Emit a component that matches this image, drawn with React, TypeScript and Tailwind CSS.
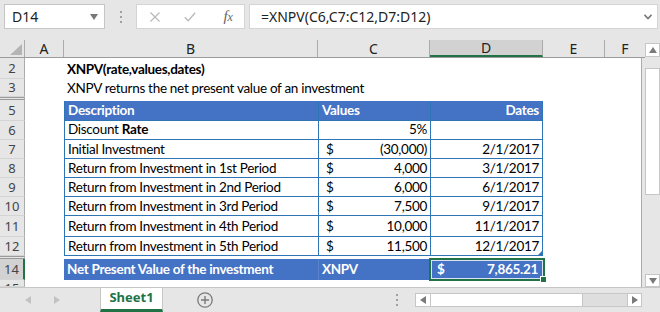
import React from 'react';

const H: Record<number, string> = {
  3: 'h-[3px]',
  7: 'h-[7px]',
  18: 'h-[18px]',
  19: 'h-[19px]',
  21: 'h-[21px]',
};

const cell = "font-['Lato',sans-serif] text-[13.5px] tracking-[-0.3px] leading-none";
const ui = "font-['Noto_Sans',sans-serif]";

type Item = { n: string; h: number; label: string; value: string; date: string };

const items: Item[] = [
  { n: '7', h: 19, label: 'Initial Investment', value: '(30,000)', date: '2/1/2017' },
  { n: '8', h: 19, label: 'Return from Investment in 1st Period', value: '4,000', date: '3/1/2017' },
  { n: '9', h: 19, label: 'Return from Investment in 2nd Period', value: '6,000', date: '6/1/2017' },
  { n: '10', h: 19, label: 'Return from Investment in 3rd Period', value: '7,500', date: '9/1/2017' },
  { n: '11', h: 21, label: 'Return from Investment in 4th Period', value: '10,000', date: '11/1/2017' },
  { n: '12', h: 19, label: 'Return from Investment in 5th Period', value: '11,500', date: '12/1/2017' },
];

function Row({ n, h, sel, cut, children }: { n: string; h: number; sel?: boolean; cut?: boolean; children?: React.ReactNode }) {
  return (
    <div className={`flex ${H[h]}`}>
      <div
        className={`w-[25px] shrink-0 flex justify-center overflow-hidden border-b border-b-[#d4d4d4] text-[13px] tracking-normal text-[#444] ${ui} ${
          cut ? 'items-start pt-[2px]' : 'items-center'
        } ${sel ? 'bg-[#d2d2d2] border-r-2 border-r-[#217346]' : 'bg-[#e6e6e6] border-r border-r-[#ababab]'}`}
      >
        {n}
      </div>
      <div className="w-[39px] shrink-0" />
      {children}
    </div>
  );
}

function Hidden() {
  return (
    <div className="flex h-[3px]">
      <div className="w-[25px] shrink-0 bg-[#e6e6e6] border-y border-y-[#9a9a9a] border-r border-r-[#ababab]" />
    </div>
  );
}

function Tri({ dir, color }: { dir: 'l' | 'r' | 'u' | 'd'; color: string }) {
  const pts = {
    l: '6,0 6,8 0,4',
    r: '0,0 0,8 6,4',
    u: '0,6 8,6 4,0',
    d: '0,0 8,0 4,6',
  }[dir];
  const vb = dir === 'l' || dir === 'r' ? '0 0 6 8' : '0 0 8 6';
  const cls = dir === 'l' || dir === 'r' ? 'w-[6px] h-[8px]' : 'w-[8px] h-[6px]';
  return (
    <svg viewBox={vb} className={cls}>
      <polygon points={pts} fill={color} />
    </svg>
  );
}

export default function App() {
  const border = 'border-[#2e75b6]';
  return (
    <div className="w-[660px] h-[312px] bg-[#e6e6e6] overflow-hidden flex flex-col select-none">
      {/* formula bar */}
      <div className="h-[40px] flex items-start pt-[4px] pl-[4px] shrink-0">
        <div className={`w-[101px] h-[25px] bg-white border border-[#c6c6c6] flex items-center pl-[7px] pr-[6px] ${ui} text-[14px] text-[#222]`}>
          <span className="flex-1">D14</span>
          <Tri dir="d" color="#777" />
        </div>
        <div className="w-[31px] h-[25px] flex flex-col items-center justify-center gap-[3px]">
          <span className="w-[2px] h-[2px] bg-[#a0a0a0]" />
          <span className="w-[2px] h-[2px] bg-[#a0a0a0]" />
          <span className="w-[2px] h-[2px] bg-[#a0a0a0]" />
        </div>
        <div className="w-[109px] h-[25px] bg-white border border-[#d4d4d4] flex items-center">
          <div className="w-[36px] flex justify-center">
            <svg viewBox="0 0 10 10" className="w-[10px] h-[10px]">
              <path d="M0.5 0.5 L9.5 9.5 M9.5 0.5 L0.5 9.5" stroke="#b8b8b8" strokeWidth="1.2" />
            </svg>
          </div>
          <div className="w-[36px] flex justify-center">
            <svg viewBox="0 0 12 10" className="w-[12px] h-[10px]">
              <path d="M0.8 5.2 L4.2 8.8 L11.2 0.8" stroke="#b8b8b8" strokeWidth="1.3" fill="none" />
            </svg>
          </div>
          <div className="w-[36px] flex justify-center pl-[4px]">
            <span className="font-['Liberation_Serif',serif] italic text-[15px] text-[#666] leading-none">
              f<span className="text-[12px]">x</span>
            </span>
          </div>
        </div>
        <div className={`ml-[4px] w-[409px] h-[25px] bg-white border border-[#d4d4d4] flex items-center pl-[11px] pr-[5px] ${ui} text-[14px] text-[#222]`}>
          <span className="flex-1">=XNPV(C6,C7:C12,D7:D12)</span>
          <svg viewBox="0 0 8 6" className="w-[8px] h-[6px]">
            <path d="M0.5 0.8 L4 4.5 L7.5 0.8" stroke="#777" strokeWidth="1.6" fill="none" />
          </svg>
        </div>
      </div>

      {/* sheet + vertical scroll */}
      <div className="h-[247px] flex shrink-0">
        <div className="w-[645px] flex flex-col">
          {/* column headers */}
          <div className={`h-[18px] flex border-b border-[#9b9b9b] ${ui} text-[14px] text-[#222] shrink-0`}>
            <div className="w-[25px] border-r border-[#ababab] flex items-end justify-end pr-[2px] pb-[2px]">
              <svg viewBox="0 0 12 11" className="w-[12px] h-[11px]">
                <polygon points="12,0 12,11 0,11" fill="#b4b4b4" />
              </svg>
            </div>
            <div className="w-[39px] border-r border-[#ababab] flex items-center justify-center">A</div>
            <div className="w-[254px] border-r border-[#ababab] flex items-center justify-center">B</div>
            <div className="w-[112px] border-r border-[#ababab] flex items-center justify-center">C</div>
            <div className="w-[113px] border-r border-[#ababab] bg-[#d2d2d2] border-b-2 border-b-[#217346] flex items-center justify-center">D</div>
            <div className="w-[62px] border-r border-[#ababab] flex items-center justify-center">E</div>
            <div className="flex-1 flex items-center justify-center">F</div>
          </div>

          {/* body */}
          <div className={`flex-1 w-[642px] bg-white border-r border-[#ababab] flex flex-col ${cell} text-black`}>
            <Row n="2" h={21}>
              <div className="w-[254px] flex items-center pl-[3px] pt-[3px] font-bold">XNPV(rate,values,dates)</div>
            </Row>
            <Row n="3" h={18}>
              <div className="w-[400px] flex items-center pl-[3px] pt-[1px] whitespace-nowrap">
                XNPV returns the net present value of an investment
              </div>
            </Row>
            <Hidden />
            <Row n="5" h={21}>
              <div className={`w-[254px] mt-[1px] bg-[#4472c4] border-l border-b ${border} flex items-center pl-[3px] text-white font-bold`}>
                Description
              </div>
              <div className={`w-[112px] mt-[1px] bg-[#4472c4] border-l border-b ${border} flex items-center pl-[3px] text-white font-bold`}>
                Values
              </div>
              <div className={`w-[113px] mt-[1px] bg-[#4472c4] border-x border-b ${border} flex items-center justify-end pr-[3px] text-white font-bold`}>
                Dates
              </div>
            </Row>
            <Row n="6" h={19}>
              <div className={`w-[254px] border-l border-b ${border} flex items-center pl-[3px]`}>
                Discount&nbsp;<span className="font-bold">Rate</span>
              </div>
              <div className={`w-[112px] border-l border-b ${border} flex items-center justify-end pr-[3px]`}>5%</div>
              <div className={`w-[113px] border-x border-b ${border}`} />
            </Row>
            {items.map((it, i) => (
              <Row key={it.n} n={it.n} h={it.h}>
                <div className={`w-[254px] border-l border-b ${border} flex items-center pl-[3px] pt-[1px]`}>{it.label}</div>
                <div className={`w-[112px] border-l border-b ${border} flex items-center justify-between pl-[7px] pr-[3px] pt-[1px]`}>
                  <span>$</span>
                  <span>{it.value}</span>
                </div>
                <div className={`relative w-[113px] border-x border-b ${border} flex items-center justify-end pr-[3px] pt-[1px]`}>
                  {it.date}
                  {i === items.length - 1 && (
                    <svg viewBox="0 0 4 4" className="absolute right-0 bottom-0 w-[4px] h-[4px]">
                      <polygon points="4,0 4,4 0,4" fill="#2e75b6" />
                    </svg>
                  )}
                </div>
              </Row>
            ))}
            <Hidden />
            <Row n="14" h={21} sel>
              <div className="w-[254px] bg-[#4472c4] flex items-center pl-[3px] pt-[1px] text-white font-bold">
                Net Present Value of the investment
              </div>
              <div className="w-[112px] bg-[#4472c4] border-l border-[#5a84cc] flex items-center pl-[3px] pt-[1px] text-white font-bold">
                XNPV
              </div>
              <div className="relative w-[113px] bg-[#4472c4] flex items-center justify-between pl-[7px] pr-[5px] pt-[1px] text-white font-bold">
                <span>$</span>
                <span>7,865.21</span>
                <div className="absolute -left-[1px] -top-[1px] -right-[2px] -bottom-[1px] border-2 border-[#217346]">
                  <div className="w-full h-full border border-white/80" />
                </div>
                <div className="absolute -right-[4px] -bottom-[3px] w-[7px] h-[7px] bg-[#217346] border border-white" />
              </div>
            </Row>
            <Row n="15" h={7} cut />
          </div>
        </div>

        {/* vertical scrollbar */}
        <div className="w-[15px] flex flex-col">
          <div className="mt-[3px] h-[14px] bg-white border border-[#c6c6c6] flex items-center justify-center">
            <Tri dir="u" color="#7a7a7a" />
          </div>
          <div className="mt-[11px] h-[127px] bg-white border border-[#c6c6c6]" />
          <div className="flex-1" />
          <div className="h-[13px] bg-white border border-[#c6c6c6] flex items-center justify-center">
            <Tri dir="d" color="#7a7a7a" />
          </div>
        </div>
      </div>

      {/* sheet tabs */}
      <div className="h-[25px] flex items-center border-t border-[#c6c6c6] shrink-0">
        <div className="w-[100px] h-full flex items-center">
          <span className="ml-[25px] flex">
            <Tri dir="l" color="#c2c2c2" />
          </span>
          <span className="ml-[23px] flex">
            <Tri dir="r" color="#c2c2c2" />
          </span>
        </div>
        <div className={`w-[63px] h-full -mt-px bg-white border-x border-[#c6c6c6] border-b-[3px] border-b-[#217346] flex items-center justify-center ${ui} text-[13px] font-bold text-[#217346]`}>
          Sheet1
        </div>
        <svg viewBox="0 0 16 16" className="ml-[34px] w-[16px] h-[16px]">
          <circle cx="8" cy="8" r="7.2" stroke="#7a7a7a" strokeWidth="1.3" fill="none" />
          <path d="M8 4 V12 M4 8 H12" stroke="#7a7a7a" strokeWidth="1.4" />
        </svg>
        <div className="ml-[183px] w-[2px] flex flex-col gap-[3px]">
          <span className="w-[2px] h-[2px] bg-[#a0a0a0]" />
          <span className="w-[2px] h-[2px] bg-[#a0a0a0]" />
          <span className="w-[2px] h-[2px] bg-[#a0a0a0]" />
        </div>
        <div className="ml-[17px] w-[227px] h-[14px] flex border border-[#c6c6c6] bg-[#dedede]">
          <div className="w-[15px] bg-white border-r border-[#c6c6c6] flex items-center justify-center">
            <Tri dir="l" color="#7a7a7a" />
          </div>
          <div className="w-[152px] bg-white border-r border-[#c6c6c6]" />
          <div className="flex-1" />
          <div className="w-[14px] bg-white border-l border-[#c6c6c6] flex items-center justify-center">
            <Tri dir="r" color="#7a7a7a" />
          </div>
        </div>
      </div>
    </div>
  );
}
